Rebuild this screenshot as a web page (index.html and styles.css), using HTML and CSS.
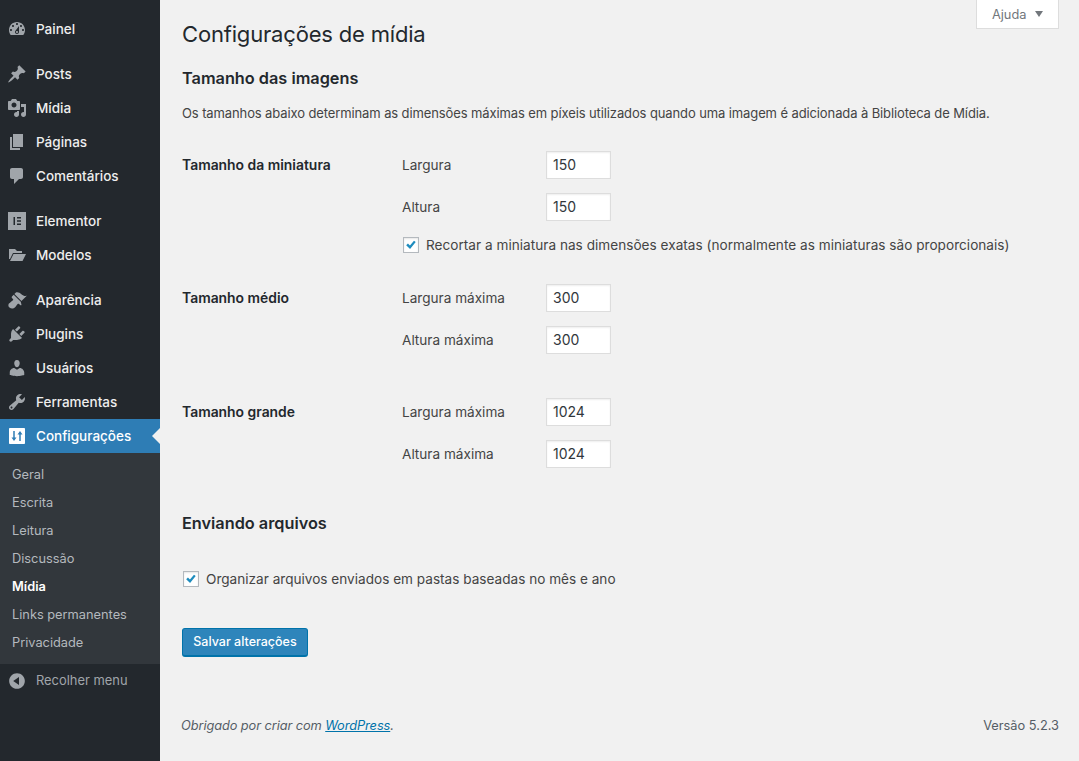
FILE: index.html
```html
<!DOCTYPE html>
<html lang="pt-BR">
<head>
    <meta charset="UTF-8">
    <meta name="viewport" content="width=device-width, initial-scale=1.0">
    <title>Configurações de mídia</title>
    <link rel="stylesheet" href="styles.css">
</head>
<body>
    <div class="wrap">
        <nav class="sidebar">
            <ul class="menu">
                <li class="item"><svg class="icon" viewBox="0 0 20 20"><path d="M3.76 16h12.48c1.1-1.37 1.76-3.11 1.76-5 0-4.42-3.58-8-8-8s-8 3.58-8 8c0 1.89.66 3.63 1.76 5zM10 4c.55 0 1 .45 1 1s-.45 1-1 1-1-.45-1-1 .45-1 1-1zM6 6c.55 0 1 .45 1 1s-.45 1-1 1-1-.45-1-1 .45-1 1-1zm8 0c.55 0 1 .45 1 1s-.45 1-1 1-1-.45-1-1 .45-1 1-1zm-5.37 5.55L12 7v6c0 1.1-.9 2-2 2s-2-.9-2-2c0-.57.24-1.08.63-1.45zM4 10c.55 0 1 .45 1 1s-.45 1-1 1-1-.45-1-1 .45-1 1-1zm12 0c.55 0 1 .45 1 1s-.45 1-1 1-1-.45-1-1 .45-1 1-1zm-5 3c0-.55-.45-1-1-1s-1 .45-1 1 .45 1 1 1 1-.45 1-1z"/></svg>Painel</li>
            </ul>
            <ul class="menu">
                <li class="item"><svg class="icon" viewBox="0 0 20 20"><path d="M10.44 3.02l1.82-1.82 6.36 6.35-1.83 1.82c-1.05-.68-2.48-.57-3.41.36l-.75.75c-.92.93-1.04 2.35-.35 3.41l-1.83 1.82-2.41-2.41-2.8 2.79c-.42.42-3.38 2.71-3.8 2.29s1.86-3.39 2.28-3.81l2.79-2.79L4.1 9.36l1.83-1.82c1.05.69 2.48.57 3.4-.36l.75-.75c.93-.92 1.05-2.35.36-3.41z"/></svg>Posts</li>
                <li class="item"><svg class="icon" viewBox="0 0 20 20"><path d="M13 11V4c0-.55-.45-1-1-1h-1.67L9 1H5L3.67 3H2c-.55 0-1 .45-1 1v7c0 .55.45 1 1 1h10c.55 0 1-.45 1-1zM7 4.5c1.38 0 2.5 1.12 2.5 2.5S8.38 9.5 7 9.5 4.5 8.38 4.5 7 5.62 4.5 7 4.5zM14 6h5v10.5c0 1.38-1.12 2.5-2.5 2.5S14 17.88 14 16.5s1.12-2.5 2.5-2.5c.17 0 .34.02.5.05V9h-3V6zm-4 8.05V13h2v3.5c0 1.38-1.12 2.5-2.5 2.5S7 17.88 7 16.5 8.12 14 9.5 14c.17 0 .34.02.5.05z"/></svg>Mídia</li>
                <li class="item"><svg class="icon" viewBox="0 0 20 20"><path d="M6 15V2h10v13H6zm-1 1h8v2H3V5h2v11z"/></svg>Páginas</li>
                <li class="item"><svg class="icon" viewBox="0 0 20 20"><path d="M5 2h9c1.1 0 2 .9 2 2v7c0 1.1-.9 2-2 2h-2l-5 5v-5H5c-1.1 0-2-.9-2-2V4c0-1.1.9-2 2-2z"/></svg>Comentários</li>
            </ul>
            <ul class="menu">
                <li class="item"><svg class="icon" viewBox="0 0 20 20"><path fill-rule="evenodd" d="M1 1h18v18H1zM6.500 6v8h1.500V6zM10 6v1.500h4V6zM10 9.250v1.500h4v-1.500zM10 12.500V14h4v-1.500z"/></svg>Elementor</li>
                <li class="item"><svg class="icon" viewBox="0 0 20 20"><path d="M2 4h6l2 2h5v2H6L3 14H2zM6.500 9H19l-3.500 7H3z"/></svg>Modelos</li>
            </ul>
            <ul class="menu">
                <li class="item"><svg class="icon" viewBox="0 0 20 20"><path d="M14.48 11.06L7.41 3.99l1.5-1.5c.5-.56 2.3-.47 3.51.32 1.21.8 1.43 1.28 2.91 2.1 1.18.64 2.45 1.26 4.45.85zm-.71.71L6.7 4.7 4.93 6.47c-.39.39-.39 1.02 0 1.41l1.06 1.06c.39.39.39 1.03 0 1.42-.6.6-1.43 1.11-2.21 1.69-.35.26-.7.53-1.01.84C1.43 13.23.65 15.7 2.5 17.5s4.28 1.06 5.62-.28c.31-.31.58-.66.84-1.01.58-.78 1.09-1.61 1.69-2.21.39-.39 1.02-.39 1.41 0l1.06 1.06c.39.39 1.02.39 1.41 0z"/></svg>Aparência</li>
                <li class="item"><svg class="icon" viewBox="0 0 20 20"><path d="M13.11 4.36L9.87 7.6 8 5.73l3.24-3.24c.35-.34 1.05-.2 1.56.32.52.51.66 1.21.31 1.55zm-8 1.77l.91-1.12 9.01 9.01-1.19.84c-.71.71-2.63 1.16-3.82 1.16H6.14L4.9 17.26c-.59.59-1.54.59-2.12 0-.59-.58-.59-1.53 0-2.12l1.24-1.24v-3.88c0-1.13.4-3.19 1.09-3.89zm7.26 3.97l3.24-3.24c.34-.35 1.04-.21 1.55.31.52.51.66 1.21.31 1.55l-3.24 3.25z"/></svg>Plugins</li>
                <li class="item"><svg class="icon" viewBox="0 0 20 20"><path d="M10 9.25c-2.27 0-2.73-3.44-2.73-3.44C7 4.02 7.82 2 9.97 2c2.16 0 2.98 2.02 2.71 3.81 0 0-.41 3.44-2.68 3.44zm0 2.57L12.72 10c2.39 0 4.52 2.33 4.52 4.53v2.49s-3.65 1.13-7.24 1.13c-3.65 0-7.24-1.13-7.24-1.13v-2.49c0-2.25 1.94-4.48 4.47-4.48z"/></svg>Usuários</li>
                <li class="item"><svg class="icon" viewBox="0 0 20 20"><path d="M16.68 9.77c-1.34 1.34-3.3 1.67-4.95.99l-5.41 6.52c-.99.99-2.59.99-3.58 0s-.99-2.59 0-3.57l6.52-5.42c-.68-1.65-.35-3.61.99-4.95 1.28-1.28 3.12-1.62 4.72-1.06l-2.89 2.89 2.82 2.82 2.86-2.87c.53 1.58.18 3.39-1.08 4.65zM3.81 16.21c.4.39 1.04.39 1.43 0 .4-.4.4-1.04 0-1.43-.39-.4-1.03-.4-1.43 0-.39.39-.39 1.03 0 1.43z"/></svg>Ferramentas</li>
                <li class="item current"><svg class="icon" viewBox="0 0 20 20"><path fill-rule="evenodd" d="M3 2h14c.55 0 1 .45 1 1v14c0 .55-.45 1-1 1H3c-.55 0-1-.45-1-1V3c0-.55.45-1 1-1zM6.250 5v6.500H4.500L7 15l2.500-3.500H7.750V5zM13 5l-2.500 3.500h1.750V15h1.500V8.500h1.750z"/></svg>Configurações</li>
            </ul>
            <ul class="submenu">
                <li>Geral</li>
                <li>Escrita</li>
                <li>Leitura</li>
                <li>Discussão</li>
                <li class="active">Mídia</li>
                <li>Links permanentes</li>
                <li>Privacidade</li>
            </ul>
            <div class="collapse"><svg class="icon" viewBox="0 0 20 20"><path d="M10 2.160c4.330 0 7.840 3.510 7.840 7.840s-3.510 7.840-7.840 7.840S2.160 14.330 2.160 10 5.710 2.160 10 2.160zm2 11.720V6.120L6.180 9.970z"/></svg>Recolher menu</div>
        </nav>

        <div class="content">
            <button type="button" class="helpTab">Ajuda <span class="caret"></span></button>
            <form class="settings" onsubmit="return false;">
                <h1 class="title">Configurações de mídia</h1>
                <h2 class="heading">Tamanho das imagens</h2>
                <p class="intro">Os tamanhos abaixo determinam as dimensões máximas em píxeis utilizados quando uma imagem é adicionada à Biblioteca de Mídia.</p>

                <div class="sizeRow thumb">
                    <div class="sizeName">Tamanho da miniatura</div>
                    <div class="fields">
                        <label class="field"><span>Largura</span><input type="text" value="150"></label>
                        <label class="field"><span>Altura</span><input type="text" value="150"></label>
                        <label class="checkRow"><span class="check"><svg viewBox="0 0 16 16"><path d="M2.500 8.200l2-2 2.300 2.300 4.600-5.500 2 1.700-6.500 7.800z"/></svg></span>Recortar a miniatura nas dimensões exatas (normalmente as miniaturas são proporcionais)</label>
                    </div>
                </div>
                <div class="sizeRow middle">
                    <div class="sizeName">Tamanho médio</div>
                    <div class="fields">
                        <label class="field"><span>Largura máxima</span><input type="text" value="300"></label>
                        <label class="field"><span>Altura máxima</span><input type="text" value="300"></label>
                    </div>
                </div>
                <div class="sizeRow">
                    <div class="sizeName">Tamanho grande</div>
                    <div class="fields">
                        <label class="field"><span>Largura máxima</span><input type="text" value="1024"></label>
                        <label class="field"><span>Altura máxima</span><input type="text" value="1024"></label>
                    </div>
                </div>

                <h2 class="heading uploads">Enviando arquivos</h2>
                <label class="checkRow organize"><span class="check"><svg viewBox="0 0 16 16"><path d="M2.500 8.200l2-2 2.300 2.300 4.600-5.500 2 1.700-6.500 7.800z"/></svg></span>Organizar arquivos enviados em pastas baseadas no mês e ano</label>
                <button type="submit" class="save">Salvar alterações</button>
            </form>
            <footer class="footer">
                <span class="thanks">Obrigado por criar com <a href="#">WordPress</a>.</span>
                <span>Versão 5.2.3</span>
            </footer>
        </div>
    </div>
</body>
</html>
```

FILE: styles.css
```css
* {
    box-sizing: border-box;
}
html, body {
    height: 100%;
}
body {
    margin: 0;
    overflow: hidden;
    background: #f1f1f1;
    color: #444;
    font-family: Inter, "Liberation Sans", sans-serif;
    font-size: 13.5px;
}
.wrap {
    display: flex;
    min-height: 761px;
}

/* sidebar */
.sidebar {
    width: 160px;
    flex-shrink: 0;
    background: #23282d;
    padding-top: 12px;
}
.menu {
    list-style: none;
    margin: 0 0 11px;
    padding: 0;
}
.menu:nth-of-type(4) {
    margin-bottom: 0;
}
.item {
    display: flex;
    align-items: center;
    height: 34px;
    padding-bottom: 1px;
    color: #eee;
    font-size: 13.5px;
    font-weight: 500;
}
.icon {
    width: 20px;
    height: 20px;
    margin: 1px 9px 0 7px;
    fill: #a0a5aa;
    flex-shrink: 0;
}
.current {
    position: relative;
    background: #2e7db5;
    color: #fff;
}
.current .icon {
    fill: #fff;
}
.current::after {
    content: "";
    position: absolute;
    right: 0;
    top: 9px;
    border: 8px solid transparent;
    border-right-color: #f1f1f1;
}
.submenu {
    list-style: none;
    margin: 0;
    padding: 7px 0 8px;
    background: #32373c;
    color: #b4b9be;
    font-size: 12.800px;
}
.submenu li {
    height: 28px;
    line-height: 30px;
    padding-left: 12px;
}
.submenu .active {
    color: #fff;
    font-weight: 600;
}
.collapse {
    display: flex;
    align-items: center;
    height: 34px;
    padding-bottom: 1px;
    color: #a0a5aa;
    font-size: 12.900px;
}

/* content */
.content {
    position: relative;
    flex: 1;
    padding: 0 20px 0 22px;
}
.helpTab {
    position: absolute;
    top: 0;
    right: 20px;
    width: 83px;
    height: 29px;
    padding: 0;
    background: #fff;
    border: 1px solid #ddd;
    border-top: 0;
    color: #72777c;
    font: inherit;
    font-size: 12.800px;
}
.caret {
    display: inline-block;
    margin-left: 5px;
    vertical-align: 2px;
    border: 4.500px solid transparent;
    border-top: 6px solid #72777c;
    border-bottom: 0;
}
.title {
    margin: 0;
    padding-top: 20px;
    color: #23282d;
    font-size: 22px;
    font-weight: 400;
    letter-spacing: -0.18px;
    line-height: 28px;
}
.heading {
    margin: 19px 0 0;
    color: #23282d;
    font-size: 16.300px;
    font-weight: 600;
    line-height: 22px;
}
.intro {
    margin: 15px 0 0;
    font-size: 13px;
    letter-spacing: -0.11px;
    line-height: 18px;
}
.sizeRow {
    display: grid;
    grid-template-columns: 220px 1fr;
    margin-bottom: 30px;
}
.thumb {
    margin-top: 29px;
}
.middle {
    margin-bottom: 44px;
}
.sizeName {
    padding-top: 5px;
    color: #23282d;
    font-size: 13.900px;
    font-weight: 600;
    line-height: 18px;
}
.fields {
    display: flex;
    flex-direction: column;
    gap: 14px;
}
.fields .checkRow {
    margin-top: 1px;
    letter-spacing: 0.02px;
}
.field {
    display: flex;
    align-items: center;
}
.field span {
    width: 144px;
    padding-bottom: 1px;
    font-size: 13.600px;
}
.field input {
    width: 65px;
    height: 28px;
    padding: 0 6px 1px;
    border: 1px solid #ddd;
    background: #fff;
    color: #32373c;
    font: inherit;
    font-size: 14px;
    box-shadow: inset 0 1px 2px rgba(0, 0, 0, 0.07);
    outline: none;
}
.checkRow {
    display: flex;
    align-items: center;
    font-size: 13.600px;
    line-height: 18px;
}
.check {
    width: 16px;
    height: 16px;
    margin: 0 7px 0 1px;
    border: 1px solid #b4b9be;
    background: #fff;
    box-shadow: inset 0 1px 2px rgba(0, 0, 0, 0.1);
}
.check svg {
    display: block;
    width: 14px;
    height: 14px;
    fill: #1e8cbe;
}
.uploads {
    margin-top: 44px;
}
.organize {
    margin-top: 36px;
}
.save {
    display: block;
    width: 126px;
    height: 29px;
    margin-top: 40px;
    padding: 0 0 1px;
    background: #2e85bb;
    border: 1px solid #0073aa;
    border-bottom-width: 2px;
    border-radius: 3px;
    color: #fff;
    font: inherit;
    font-size: 12.500px;
    font-weight: 500;
}
.footer {
    display: flex;
    justify-content: space-between;
    margin: 61px 0 0 -1px;
    color: #555d66;
    font-size: 12.800px;
}
.thanks {
    font-style: italic;
    letter-spacing: -0.08px;
}
.footer a {
    color: #0073aa;
}
```
